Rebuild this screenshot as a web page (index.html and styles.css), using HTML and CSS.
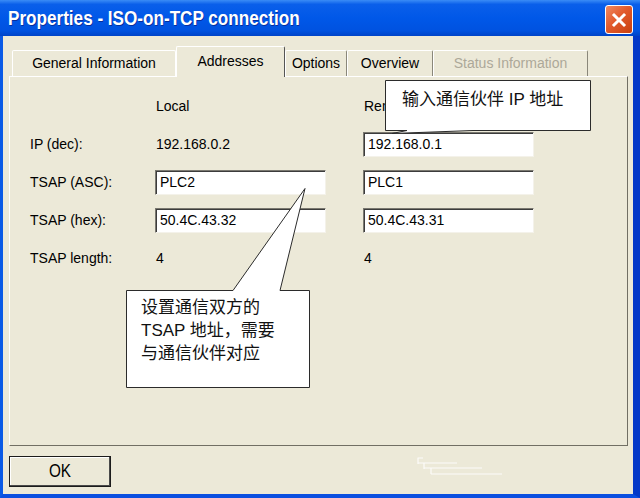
FILE: index.html
```html
<!DOCTYPE html>
<html lang="en">
<head>
  <meta charset="UTF-8">
  <meta name="viewport" content="width=device-width, initial-scale=1.0">
  <title>Properties - ISO-on-TCP connection</title>
  <link rel="stylesheet" href="styles.css">
</head>
<body>
  <div class="window">
    <div class="titlebar">
      <span class="title">Properties - ISO-on-TCP connection</span>
      <button class="close-btn" title="Close">
        <svg width="16" height="16" viewBox="0 0 16 16"><path d="M3 3 L13 13 M13 3 L3 13" stroke="#fff" stroke-width="3" stroke-linecap="square"/></svg>
      </button>
    </div>

    <div class="client">
      <div class="tabs">
        <div class="tab tab-general">General Information</div>
        <div class="tab tab-addresses active">Addresses</div>
        <div class="tab tab-options">Options</div>
        <div class="tab tab-overview">Overview</div>
        <div class="tab tab-status disabled">Status Information</div>
      </div>

      <div class="panel">
        <div class="addr-grid">
          <span></span>
          <span class="col-head">Local</span>
          <span class="col-head">Remote</span>

          <span class="label">IP (dec):</span>
          <span class="value">192.168.0.2</span>
          <span class="field">192.168.0.1</span>

          <span class="label">TSAP (ASC):</span>
          <span class="field">PLC2</span>
          <span class="field">PLC1</span>

          <span class="label">TSAP (hex):</span>
          <span class="field">50.4C.43.32</span>
          <span class="field">50.4C.43.31</span>

          <span class="label">TSAP length:</span>
          <span class="value">4</span>
          <span class="value">4</span>
        </div>
      </div>

      <div class="footer">
        <button class="ok-btn"><span>OK</span></button>
        <svg class="mark" width="90" height="22" viewBox="0 0 90 22">
          <path d="M0.5 2 H6 M1 2 V8 M1 7 H40 M7 7 V13 M7 12 H65 M14 12 V18 M14 18 H85" stroke="#fff" stroke-width="1.2" fill="none" opacity="0.85"/>
        </svg>
      </div>
    </div>

    <!-- annotation callouts -->
    <div class="callout callout-ip">
      <svg class="callout-shape" width="206" height="55" viewBox="0 0 206 55">
        <path d="M0.5 0.5 H205.5 V50.5 H88 L7 53.5 L22 50.5 H0.5 Z" fill="#fff" stroke="#2b2b2b" stroke-width="1"/>
      </svg>
      <div class="callout-text">输入通信伙伴 IP 地址</div>
    </div>

    <div class="callout callout-tsap">
      <svg class="callout-shape" width="185" height="201" viewBox="0 0 185 201">
        <path d="M0.5 102.5 H107 L179 0.5 L154 102.5 H183.5 V199.5 H0.5 Z" fill="#fff" stroke="#2b2b2b" stroke-width="1"/>
      </svg>
      <div class="callout-text">设置通信双方的<br>TSAP 地址，需要<br>与通信伙伴对应</div>
    </div>
  </div>
</body>
</html>
```

FILE: styles.css
```css
* {
  box-sizing: border-box;
}
body {
  margin: 0;
  font-family: "Liberation Sans", Arial, sans-serif;
  font-size: 14px;
  color: #000;
}
.window {
  position: relative;
  width: 640px;
  height: 498px;
  display: flex;
  flex-direction: column;
  background: #ECE9D8;
  overflow: hidden;
}
.titlebar {
  height: 36px;
  display: flex;
  align-items: center;
  justify-content: space-between;
  padding: 0 7px 0 8px;
  background: linear-gradient(#3a8cf6 0%, #0a5fea 12%, #0058e8 50%, #0052e0 85%, #0044c8 100%);
}
.title {
  display: inline-block;
  color: #fff;
  font-family: "Liberation Sans", Arial, sans-serif;
  font-weight: bold;
  font-size: 21px;
  white-space: nowrap;
  transform: scaleX(0.815);
  transform-origin: left center;
  text-shadow: 1px 1px 0 rgba(10, 20, 110, 0.6);
}
.close-btn {
  width: 28px;
  height: 29px;
  margin-top: 3px;
  padding: 0;
  display: flex;
  align-items: center;
  justify-content: center;
  border: 1px solid #fff;
  border-radius: 3px;
  background: linear-gradient(135deg, #f08a62 0%, #e25a2c 45%, #c8400f 100%);
}
.client {
  flex: 1;
  padding: 10px 5px 0 6px;
  border-left: 3px solid #0a5ae6;
  border-right: 7px solid #0338c8;
  border-bottom: 4px solid #0a4fe0;
}
.tabs {
  display: flex;
  align-items: flex-end;
  height: 30px;
  padding-left: 3px;
}
.tab {
  height: 26px;
  line-height: 25px;
  text-align: center;
  font-size: 14px;
  border-top: 1px solid #fff;
  border-left: 1px solid #fff;
  border-right: 1px solid #8a877a;
  border-radius: 2px 2px 0 0;
  background: #ECE9D8;
}
.tab-general {
  width: 164px;
  border-right-color: #fff;
}
.tab-addresses {
  width: 109px;
}
.tab-options {
  width: 62px;
}
.tab-overview {
  width: 86px;
}
.tab-status {
  width: 155px;
}
.tab.active {
  height: 31px;
  line-height: 28px;
  margin-bottom: -1px;
  position: relative;
  z-index: 1;
  border-right-color: #555;
}
.tab.disabled {
  color: #aca899;
}
.panel {
  height: 370px;
  border: 1px solid;
  border-color: #fff #716f64 #716f64 #fff;
  padding: 16px 0 0 19px;
}
.addr-grid {
  display: grid;
  grid-template-columns: 126px 208px 172px;
  grid-auto-rows: 26px;
  row-gap: 12px;
  align-items: center;
}
.label,
.col-head,
.value {
  padding-left: 1px;
}
.field {
  width: 171px;
  height: 25px;
  line-height: 22px;
  padding-left: 4px;
  background: #fff;
  border: 1px solid;
  border-color: #7a7870 #f4f2ea #f4f2ea #7a7870;
  box-shadow: inset 1px 1px 0 #3c3c3c;
}
.footer {
  display: flex;
  align-items: flex-start;
  padding-top: 10px;
}
.ok-btn {
  width: 102px;
  height: 31px;
  font-family: "Liberation Sans", Arial, sans-serif;
  font-size: 18px;
  color: #000;
  background: #ECE9D8;
  border: 1px solid #1c1c1c;
  box-shadow: inset -1px -1px 0 #4a4a4a, inset 1px 1px 0 #fff;
}
.ok-btn span {
  display: inline-block;
  transform: scaleX(0.85);
}
.mark {
  margin-left: 306px;
}
.callout {
  position: absolute;
}
.callout-shape {
  position: absolute;
  left: 0;
  top: 0;
}
.callout-text {
  position: absolute;
  font-family: "Liberation Sans", "Noto Sans CJK SC", sans-serif;
  font-size: 17px;
  line-height: 23px;
  color: #111;
  white-space: nowrap;
}
.callout-ip {
  left: 385px;
  top: 80px;
  width: 206px;
  height: 55px;
}
.callout-ip .callout-text {
  left: 17px;
  top: 8px;
}
.callout-tsap {
  left: 126px;
  top: 188px;
  width: 185px;
  height: 201px;
}
.callout-tsap .callout-text {
  left: 15px;
  top: 108px;
}
```
